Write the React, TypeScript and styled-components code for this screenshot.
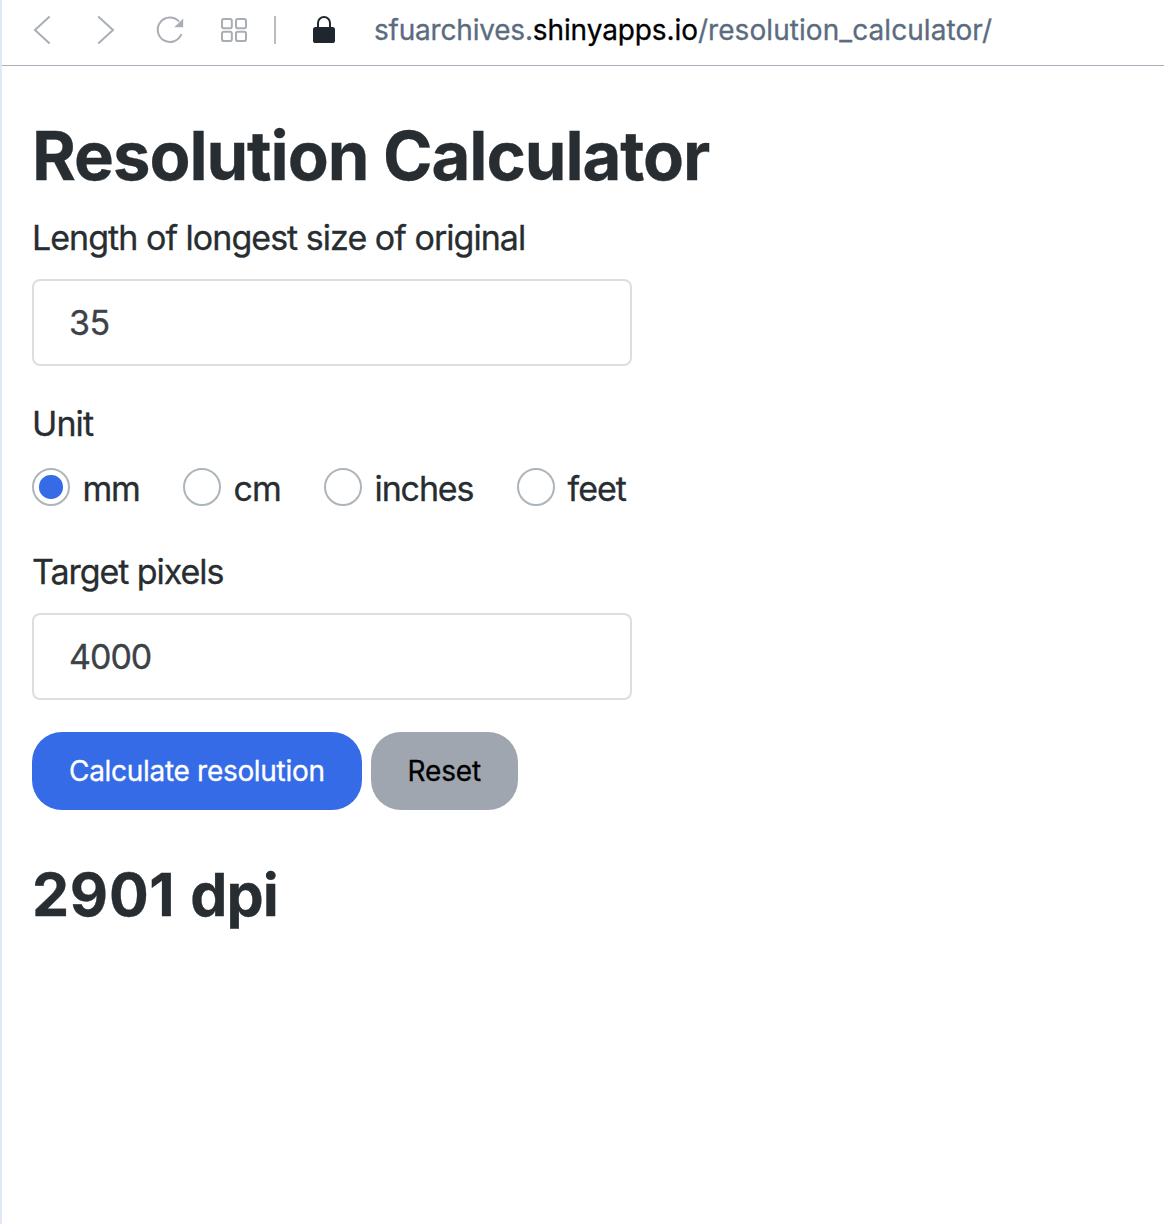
import React, { useState } from 'react';
import styled, { createGlobalStyle } from 'styled-components';

const GlobalStyle = createGlobalStyle`
  *, *::before, *::after { box-sizing: border-box; }
  body {
    margin: 0;
    background: #fff;
    color: #272d31;
    font-family: Inter, "Liberation Sans", sans-serif;
    -webkit-text-stroke-width: 0.3px;
  }
`;

const Window = styled.div`
  height: 1224px;
  border-left: 2px solid #dfe9f5;
  overflow: hidden;
  display: flex;
  flex-direction: column;
`;

const Toolbar = styled.header`
  display: flex;
  align-items: flex-start;
  height: 66px;
  flex: none;
  border-bottom: 1px solid #a5afba;
`;

const ToolbarIcons = styled.svg`
  display: block;
  flex: none;
`;

const Address = styled.div`
  margin-left: 12px;
  font-size: 28px;
  line-height: 60px;
  white-space: nowrap;
  color: #5b6c7f;
`;

const AddressPart = styled.span<{ $spacing: number; $strong?: boolean }>`
  letter-spacing: ${(p) => p.$spacing}px;
  color: ${(p) => (p.$strong ? '#000' : 'inherit')};
`;

const Page = styled.main`
  display: flex;
  flex-direction: column;
  align-items: flex-start;
  padding: 50px 30px 0;
`;

const Title = styled.h1`
  margin: 0 0 17px;
  font-size: 67px;
  line-height: 80px;
  font-weight: 700;
  letter-spacing: -1.08px;
`;

const Field = styled.div<{ $gap: number }>`
  display: flex;
  flex-direction: column;
  width: 600px;
  margin-bottom: ${(p) => p.$gap}px;
`;

const Label = styled.label<{ $gap?: number; $spacing?: number }>`
  font-size: 34px;
  line-height: 50px;
  letter-spacing: ${(p) => p.$spacing ?? -0.97}px;
  margin-bottom: ${(p) => p.$gap ?? 16}px;
`;

const Input = styled.input<{ $spacing: number }>`
  width: 600px;
  height: 87px;
  padding: 0 35px;
  border: 2px solid #dedede;
  border-radius: 8px;
  outline: none;
  background: #fff;
  color: #3c4248;
  font: 400 34px Inter, "Liberation Sans", sans-serif;
  letter-spacing: ${(p) => p.$spacing}px;
`;

const RadioRow = styled.div`
  display: grid;
  grid-template-columns: 151px 141px 193px auto;
  height: 42px;
`;

const RadioOption = styled.label<{ $spacing: number }>`
  display: flex;
  align-items: flex-start;
  gap: 12.6px;
  font-size: 34px;
  line-height: 42px;
  letter-spacing: ${(p) => p.$spacing}px;
  white-space: nowrap;
`;

const Radio = styled.input`
  appearance: none;
  flex: none;
  display: grid;
  place-items: center;
  width: 38px;
  height: 38px;
  margin: 0;
  border: 2px solid #adb5bb;
  border-radius: 50%;
  background: #fff;

  &:checked::before {
    content: '';
    width: 23.4px;
    height: 23.4px;
    border-radius: 50%;
    background: #366be8;
  }
`;

const Actions = styled.div`
  display: flex;
  gap: 9px;
  margin-bottom: 45px;
`;

const Button = styled.button<{ $primary?: boolean }>`
  width: ${(p) => (p.$primary ? 330 : 147)}px;
  height: 78px;
  padding: 0 0 0 ${(p) => (p.$primary ? 37 : 36.5)}px;
  border: 0;
  border-radius: 30px;
  background: ${(p) => (p.$primary ? '#366be8' : '#9fa6af')};
  color: ${(p) => (p.$primary ? '#fff' : '#000')};
  font: 400 28px Inter, "Liberation Sans", sans-serif;
  letter-spacing: ${(p) => (p.$primary ? -0.3 : -0.15)}px;
  text-align: left;
  white-space: nowrap;
`;

const Result = styled.h2`
  margin: 0;
  font-size: 59px;
  line-height: 80px;
  font-weight: 700;
  letter-spacing: 0.7px;
`;

const ResultUnit = styled.span`
  letter-spacing: -0.9px;
`;

const units = [
  { name: 'mm', spacing: -1.3 },
  { name: 'cm', spacing: -1.1 },
  { name: 'inches', spacing: -1.15 },
  { name: 'feet', spacing: -1 },
];

export default function App() {
  const [length, setLength] = useState('35');
  const [unit, setUnit] = useState('mm');
  const [pixels, setPixels] = useState('4000');

  return (
    <>
      <GlobalStyle />
      <Window>
        <Toolbar>
          <ToolbarIcons width="360" height="60" viewBox="2 0 360 60" fill="none">
            <g stroke="#a9aeb5" strokeWidth="2">
              <path d="M49.6 16.6 35 30l14.6 13.4" />
              <path d="M98.2 16.6 113 30 98.2 43.4" />
              <path d="M179 21.6A12.2 12.2 0 1 0 181.4 34" />
              <rect x="222" y="19" width="9.8" height="9.2" rx="1.8" />
              <rect x="236" y="19" width="10" height="9.2" rx="1.8" />
              <rect x="222" y="31.8" width="9.8" height="9.2" rx="1.8" />
              <rect x="236" y="31.8" width="10" height="9.2" rx="1.8" />
            </g>
            <path d="M183.2 18.4V27.2h-9z" fill="#a9aeb5" />
            <path d="M275 16v28" stroke="#b9bcc1" strokeWidth="2" />
            <path d="M318 29v-6a6 6 0 0 1 12 0v6" stroke="#20262d" strokeWidth="2" />
            <rect x="313" y="27" width="22" height="16" rx="2.6" fill="#20262d" />
          </ToolbarIcons>
          <Address>
            <AddressPart $spacing={-0.2}>sfuarchives.</AddressPart>
            <AddressPart $spacing={-0.1} $strong>shinyapps.io</AddressPart>
            <AddressPart $spacing={0.07}>/resolution_calculator/</AddressPart>
          </Address>
        </Toolbar>
        <Page>
          <Title>Resolution Calculator</Title>
          <Field $gap={33}>
            <Label htmlFor="length">Length of longest size of original</Label>
            <Input id="length" $spacing={-0.5} value={length} onChange={(e) => setLength(e.target.value)} />
          </Field>
          <Field $gap={37}>
            <Label as="span" $gap={19} $spacing={-0.9}>Unit</Label>
            <RadioRow>
              {units.map((u) => (
                <RadioOption key={u.name} $spacing={u.spacing}>
                  <Radio type="radio" name="unit" checked={unit === u.name} onChange={() => setUnit(u.name)} />
                  {u.name}
                </RadioOption>
              ))}
            </RadioRow>
          </Field>
          <Field $gap={32}>
            <Label htmlFor="pixels" $spacing={-1.05}>Target pixels</Label>
            <Input id="pixels" $spacing={-1} value={pixels} onChange={(e) => setPixels(e.target.value)} />
          </Field>
          <Actions>
            <Button $primary>Calculate resolution</Button>
            <Button>Reset</Button>
          </Actions>
          <Result>
            2901 <ResultUnit>dpi</ResultUnit>
          </Result>
        </Page>
      </Window>
    </>
  );
}
